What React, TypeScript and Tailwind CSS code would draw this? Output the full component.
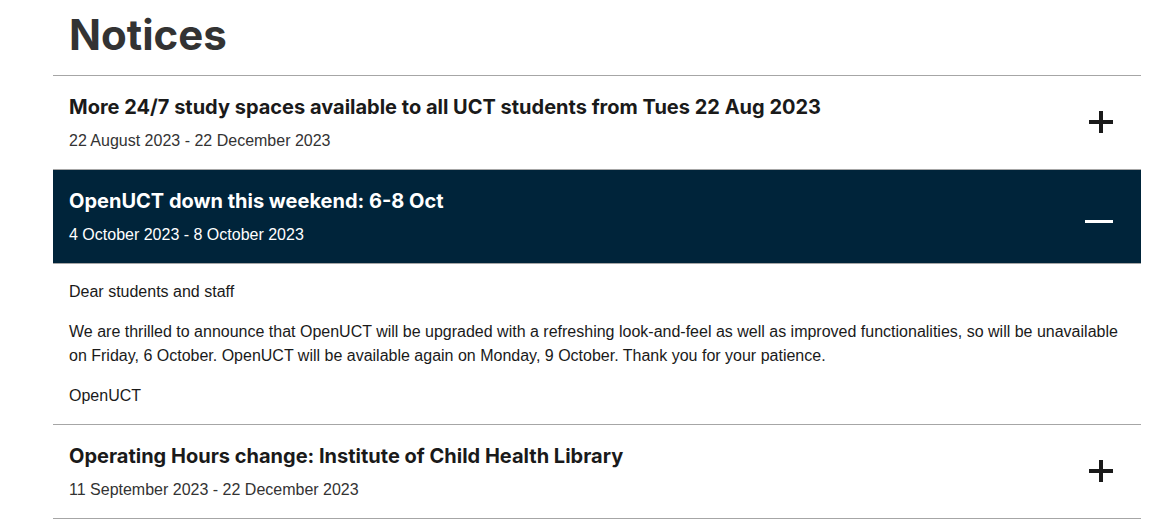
import React from "react";

const heading = { fontFamily: "Inter, 'Open Sans', sans-serif" };
const body = { fontFamily: "'Liberation Sans', Arial, sans-serif" };

function Plus() {
  return (
    <div className="relative w-[24px] h-[22px] shrink-0 mb-[3px]">
      <div className="absolute left-0 right-0 top-[9px] h-[4px] bg-[#1a1a1a]" />
      <div className="absolute top-0 bottom-0 left-[10px] w-[4px] bg-[#1a1a1a]" />
    </div>
  );
}

function Minus() {
  return <div className="w-[28px] h-[3px] bg-white shrink-0 mt-[8px]" />;
}

function Item({ title, date, open }: { title: string; date: string; open?: boolean }) {
  return (
    <div
      className={
        "flex items-center justify-between pl-4 pr-[28px] pt-[18px] pb-[16px] border-b border-[#a6a6a6] " +
        (open ? "bg-[#00243a] text-white" : "bg-white text-[#1a1a1a]")
      }
    >
      <div>
        <h3 className="text-[20px] leading-[26px] font-bold" style={heading}>
          {title}
        </h3>
        <p className={"mt-[9px] text-[16px] leading-[24px] " + (open ? "text-white" : "text-[#333]")} style={body}>
          {date}
        </p>
      </div>
      {open ? <Minus /> : <Plus />}
    </div>
  );
}

export default function App() {
  return (
    <div className="w-full bg-white min-h-[522px]">
      <div className="ml-[53px] w-[1088px]">
        <h1 className="pl-4 pt-[8px] pb-[13px] text-[42px] leading-[54px] font-bold text-[#333]" style={heading}>
          Notices
        </h1>
        <div className="border-t border-[#a6a6a6]">
          <Item
            title="More 24/7 study spaces available to all UCT students from Tues 22 Aug 2023"
            date="22 August 2023 - 22 December 2023"
          />
          <Item title="OpenUCT down this weekend: 6-8 Oct" date="4 October 2023 - 8 October 2023" open />
          <div className="px-4 py-4 border-b border-[#a6a6a6] text-[16px] leading-[24px] text-[#1a1a1a] flex flex-col gap-4" style={body}>
            <p>Dear students and staff</p>
            <p>
              We are thrilled to announce that OpenUCT will be upgraded with a refreshing look-and-feel as well as improved
              functionalities, so will be unavailable on Friday, 6 October. OpenUCT will be available again on Monday, 9
              October. Thank you for your patience.
            </p>
            <p>OpenUCT</p>
          </div>
          <Item
            title="Operating Hours change: Institute of Child Health Library"
            date="11 September 2023 - 22 December 2023"
          />
        </div>
      </div>
    </div>
  );
}
